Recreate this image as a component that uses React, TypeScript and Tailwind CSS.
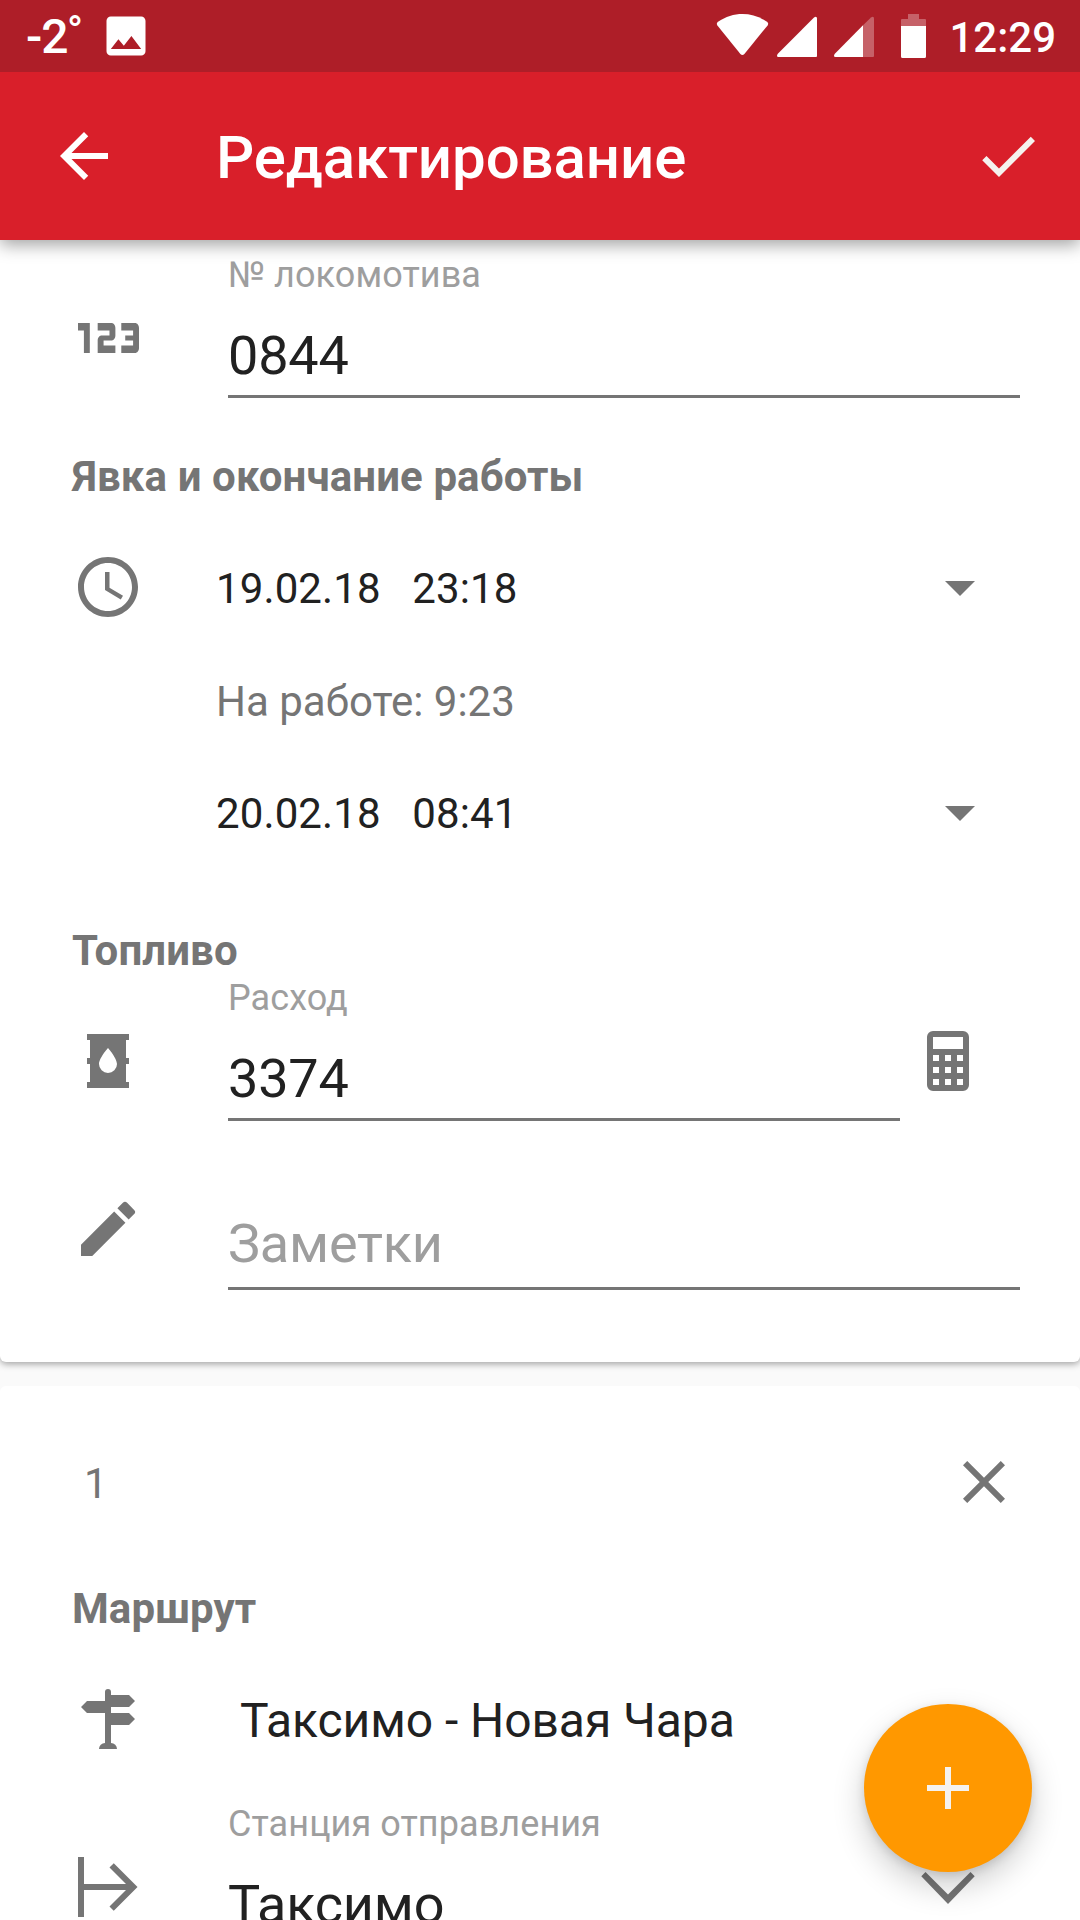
import React from 'react';
import {
  Md123,
  MdAdd,
  MdArrowBack,
  MdArrowDropDown,
  MdCheck,
  MdClose,
  MdEdit,
  MdPhoto,
  MdSchedule,
} from 'react-icons/md';

const App = () => (
  <div className="relative flex h-[1920px] w-[1080px] flex-col overflow-hidden bg-[#fafafa] font-['Roboto','Noto_Sans',sans-serif] text-[#212121]">
    <StatusBar />
    <Toolbar />

    <main className="flex flex-col gap-6">
      {/* Locomotive, shift times, fuel */}
      <section className="flex flex-col rounded-b-md bg-white pt-[14px] pb-[72px] pl-[72px] shadow-[0_2px_7px_rgba(0,0,0,0.36)]">
        <FieldRow
          icon={
            <Md123
              viewBox="4 9 15.5 6"
              preserveAspectRatio="none"
              className="mt-[21px] ml-[6px] h-[30px] w-[61px]"
            />
          }
        >
          <Field label="№ локомотива" value="0844" className="w-[792px]" />
        </FieldRow>

        <SectionTitle className="mt-[55px]">Явка и окончание работы</SectionTitle>
        <TimeRow
          icon={<MdSchedule size={72} />}
          text={'19.02.18\u00a0\u00a0\u00a023:18'}
          dropdown
          className="mt-[50px] tracking-[0.12px]"
        />
        <TimeRow text="На работе: 9:23" className="mt-[38px] text-[#757575]" />
        <TimeRow
          text={'20.02.18\u00a0\u00a0\u00a008:41'}
          dropdown
          className="mt-[37px] tracking-[0.12px]"
        />

        <SectionTitle className="mt-[76px]">Топливо</SectionTitle>
        <FieldRow icon={<BarrelIcon />} className="mt-[2px]">
          <Field label="Расход" value="3374" className="w-[672px]" />
          <button className="mt-12 ml-3 h-[72px] w-[72px] text-[#757575]">
            <CalculatorIcon />
          </button>
        </FieldRow>

        <FieldRow icon={<MdEdit size={72} />} className="mt-6">
          <div className="mt-[67px] h-[78px] w-[792px] border-b-3 border-[#757575] text-[54px] leading-[64px] tracking-[-0.2px] text-[#9e9e9e]">
            Заметки
          </div>
        </FieldRow>
      </section>

      {/* First route */}
      <section className="flex flex-col rounded-t-md bg-white pt-[60px] pl-[72px]">
        <div className="flex h-[72px] justify-between pr-[60px] pl-3 text-[#757575]">
          <span className="text-[42px] leading-[76px]">1</span>
          <MdClose size={72} />
        </div>

        <SectionTitle className="mt-[67px]">Маршрут</SectionTitle>
        <div className="mt-[50px] flex h-[75px]">
          <span className="w-[168px] text-[#757575]">
            <SignpostIcon />
          </span>
          <span className="text-[48px] leading-[75px] tracking-[-0.06px]">Таксимо - Новая Чара</span>
        </div>

        <FieldRow icon={<StartIcon />} className="mt-[45px]">
          <Field label="Станция отправления" value="Таксимо" className="w-[672px]" />
          <span className="mt-12 ml-3 text-[#757575]">
            <ChevronIcon />
          </span>
        </FieldRow>
      </section>
    </main>

    <button className="absolute top-[1704px] left-[864px] z-20 flex h-[168px] w-[168px] items-center justify-center rounded-full bg-[#ff9800] text-[#f5f2ee] shadow-[0_14px_32px_rgba(0,0,0,0.2),0_3px_10px_rgba(0,0,0,0.12)]">
      <MdAdd size={72} />
    </button>
  </div>
);

const StatusBar = () => (
  <div className="relative z-20 flex h-[72px] shrink-0 justify-between bg-[#ae1e28] font-medium text-white">
    <div className="flex pl-[26px]">
      <span className="w-[41px] text-[48px] leading-[73px] tracking-[-1px]">-2</span>
      <span className="w-[33px] text-[42px] leading-[63px]">°</span>
      <MdPhoto size={52} className="mt-[10px]" />
    </div>
    <div className="flex pr-6">
      <svg width="216" height="72" viewBox="714 0 216 72" fill="currentColor" className="mr-[19px]">
        {/* wifi */}
        <path d="M717.4 25.4Q716 23.4 718 21.8C733 11.4 752 11.4 767 21.8Q769 23.4 767.6 25.4L744.4 54Q742.4 56.2 740.4 54Z" />
        {/* both SIM signals */}
        <path d="M777.6 54 814 17.4Q817 15.8 817 18.5V56a1 1 0 0 1-1 1H778.5Q776 57 777.6 54Z" />
        <path d="M863 28.500V57h10a1 1 0 0 0 1-1V18.500Q874 15.800 871 17.400L863 25.200Z" opacity="0.3" />
        <path d="M834.6 54 863 25.2V57H835.5Q833 57 834.6 54Z" />
        {/* battery */}
        <path d="M908 14h11v5h6a1 1 0 0 1 1 1v6h-25v-6a1 1 0 0 1 1-1h6z" opacity="0.3" />
        <path d="M901 26h25v30.5a1.5 1.5 0 0 1-1.500 1.500h-22a1.500 1.500 0 0 1-1.500-1.500z" />
      </svg>
      <span className="text-[42px] leading-[76px]">12:29</span>
    </div>
  </div>
);

const Toolbar = () => (
  <header className="z-10 flex h-[168px] shrink-0 items-center bg-[#d91f2a] pr-9 pl-12 text-white shadow-[0_5px_16px_rgba(0,0,0,0.36)]">
    <MdArrowBack size={72} />
    <h1 className="ml-24 grow pt-[3px] text-[60px] leading-[72px] font-medium tracking-[-0.1px]">
      Редактирование
    </h1>
    <MdCheck size={72} className="text-[#f5f2ee]" />
  </header>
);

const SectionTitle = ({ className, children }: { className: string; children: React.ReactNode }) => (
  <h2 className={`text-[42px] leading-[48px] font-bold tracking-[0.1px] text-[#757575] ${className}`}>
    {children}
  </h2>
);

const FieldRow = ({ icon, className = '', children }: {
  icon: React.ReactNode;
  className?: string;
  children: React.ReactNode;
}) => (
  <div className={`flex ${className}`}>
    <span className="mt-12 mr-[84px] h-[72px] w-[72px] text-[#757575]">{icon}</span>
    {children}
  </div>
);

const Field = ({ label, value, className }: { label: string; value: string; className: string }) => (
  <div className={`flex flex-col ${className}`}>
    <label className="text-[36px] leading-[42px] tracking-[0.08px] text-[#9e9e9e]">{label}</label>
    <div className="mt-[27px] h-[75px] border-b-3 border-[#757575] text-[54px] leading-[66px] tracking-[-0.2px]">
      {value}
    </div>
  </div>
);

const TimeRow = ({ icon, text, dropdown, className }: {
  icon?: React.ReactNode;
  text: string;
  dropdown?: boolean;
  className: string;
}) => (
  <div className={`flex h-[75px] pr-[84px] ${className}`}>
    <span className="w-36 text-[#757575]">{icon}</span>
    <span className="grow text-[42px] leading-[75px]">{text}</span>
    {dropdown && <MdArrowDropDown size={72} className="text-[#757575]" />}
  </div>
);

const Glyph = ({ d }: { d: string }) => (
  <svg width="72" height="72" viewBox="0 0 24 24" fill="currentColor">
    <path d={d} />
  </svg>
);

const BarrelIcon = () => (
  <Glyph d="M18 19h1v2H5v-2h1v-6H5v-2h1V5H5V3h14v2h-1v6h1v2h-1v6M9 13a3 3 0 0 0 3 3 3 3 0 0 0 3-3c0-2-3-5.370-3-5.370S9 11 9 13Z" />
);

const CalculatorIcon = () => (
  <Glyph d="M7 2h10a2 2 0 0 1 2 2v16a2 2 0 0 1-2 2H7a2 2 0 0 1-2-2V4a2 2 0 0 1 2-2m0 2v4h10V4H7m0 6v2h2v-2H7m4 0v2h2v-2h-2m4 0v2h2v-2h-2m-8 4v2h2v-2H7m4 0v2h2v-2h-2m4 0v2h2v-2h-2m-8 4v2h2v-2H7m4 0v2h2v-2h-2m4 0v2h2v-2h-2Z" />
);

const SignpostIcon = () => (
  <Glyph d="M11 3a1 1 0 0 1 2 0v1h6l2 2-2 2h-6v2h6l2 2-2 2h-6v6a2 2 0 0 1 2 2H9a2 2 0 0 1 2-2V10H5L3 8l2-2h6V3Z" />
);

const StartIcon = () => (
  <Glyph d="M4 2v9h14l-5.500-5.500 1.420-1.420L21.840 12l-7.920 7.920-1.420-1.420L18 13H4v9H2V2h2Z" />
);

const ChevronIcon = () => (
  <Glyph d="M4.500 7 12 14.500 19.500 7l1.400 1.400L12 17.700 3.100 8.400 4.500 7Z" />
);

export default App;
